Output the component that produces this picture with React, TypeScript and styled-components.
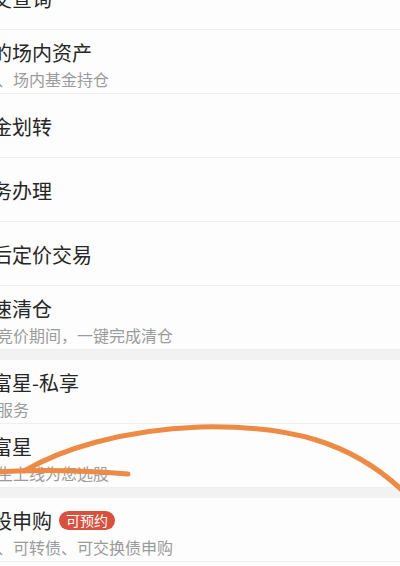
import React from "react";
import styled, { createGlobalStyle } from "styled-components";

type Item = { title: string; sub?: string; badge?: string };

const groups: Item[][] = [
  [
    { title: "成交查询" },
    { title: "我的场内资产", sub: "股票、场内基金持仓" },
    { title: "资金划转" },
    { title: "业务办理" },
    { title: "盘后定价交易" },
    { title: "极速清仓", sub: "集合竞价期间，一键完成清仓" },
  ],
  [
    { title: "财富星-私享", sub: "专属服务" },
    { title: "财富星", sub: "富先生上线为您选股" },
  ],
  [{ title: "新股申购", sub: "新股、可转债、可交换债申购", badge: "可预约" }],
];

const App: React.FC = () => {
  return (
    <>
      <GlobalStyle />
      <Page>
        <List>
          {groups.map((group, gi) => (
            <React.Fragment key={gi}>
              {gi > 0 && <Band />}
              {group.map((item) => (
                <Row key={item.title} $twoLine={!!item.sub}>
                  <TitleLine>
                    <Title>{item.title}</Title>
                    {item.badge && <Badge>{item.badge}</Badge>}
                  </TitleLine>
                  {item.sub && <Sub>{item.sub}</Sub>}
                </Row>
              ))}
            </React.Fragment>
          ))}
        </List>

        {/* hand-drawn marker stroke over the screenshot */}
        <Scribble viewBox="0 0 400 566" width={400} height={566}>
          <path
            d="M24 471 C60 450 120 430 200 427 C290 425 352 442 404 492"
            fill="none"
            stroke="#ec8a46"
            strokeWidth={5}
            strokeLinecap="round"
          />
          <path
            d="M-6 472 Q60 468 128 474"
            fill="none"
            stroke="#ec8a46"
            strokeWidth={5}
            strokeLinecap="round"
          />
        </Scribble>
      </Page>
    </>
  );
};

const GlobalStyle = createGlobalStyle`
  body {
    margin: 0;
    background: #fdfdfd;
    overflow: hidden;
  }
`;

const Page = styled.div`
  position: relative;
  width: 400px;
  height: 566px;
  overflow: hidden;
  background: #fdfdfd;
  font-family: "Noto Sans CJK SC", "Noto Sans", sans-serif;
`;

const List = styled.div`
  display: flex;
  flex-direction: column;
  width: 448px;
  margin-left: -48px;
  margin-top: -34px;
`;

const Band = styled.div`
  height: 10px;
  background: #f2f2f3;
`;

const Row = styled.div<{ $twoLine?: boolean }>`
  box-sizing: border-box;
  height: 64px;
  padding-left: 20px;
  padding-top: ${(p) => (p.$twoLine ? "6px" : "2px")};
  display: flex;
  flex-direction: column;
  justify-content: center;
  border-bottom: 1px solid #efefef;
  background: #fdfdfd;
`;

const TitleLine = styled.div`
  display: flex;
  align-items: center;
  gap: 7px;
`;

const Title = styled.span`
  font-size: 20px;
  line-height: 26px;
  color: #262626;
  white-space: nowrap;
`;

const Badge = styled.span`
  display: inline-flex;
  align-items: center;
  height: 19px;
  padding: 0 7px;
  border-radius: 10px;
  background: #d8503e;
  color: #fff;
  font-size: 14px;
  line-height: 19px;
`;

const Sub = styled.span`
  margin-top: 2px;
  margin-left: -7px;
  font-size: 16px;
  line-height: 22px;
  color: #9b9b9b;
  white-space: nowrap;
`;

const Scribble = styled.svg`
  position: absolute;
  left: 0;
  top: 0;
  pointer-events: none;
`;

export default App;
